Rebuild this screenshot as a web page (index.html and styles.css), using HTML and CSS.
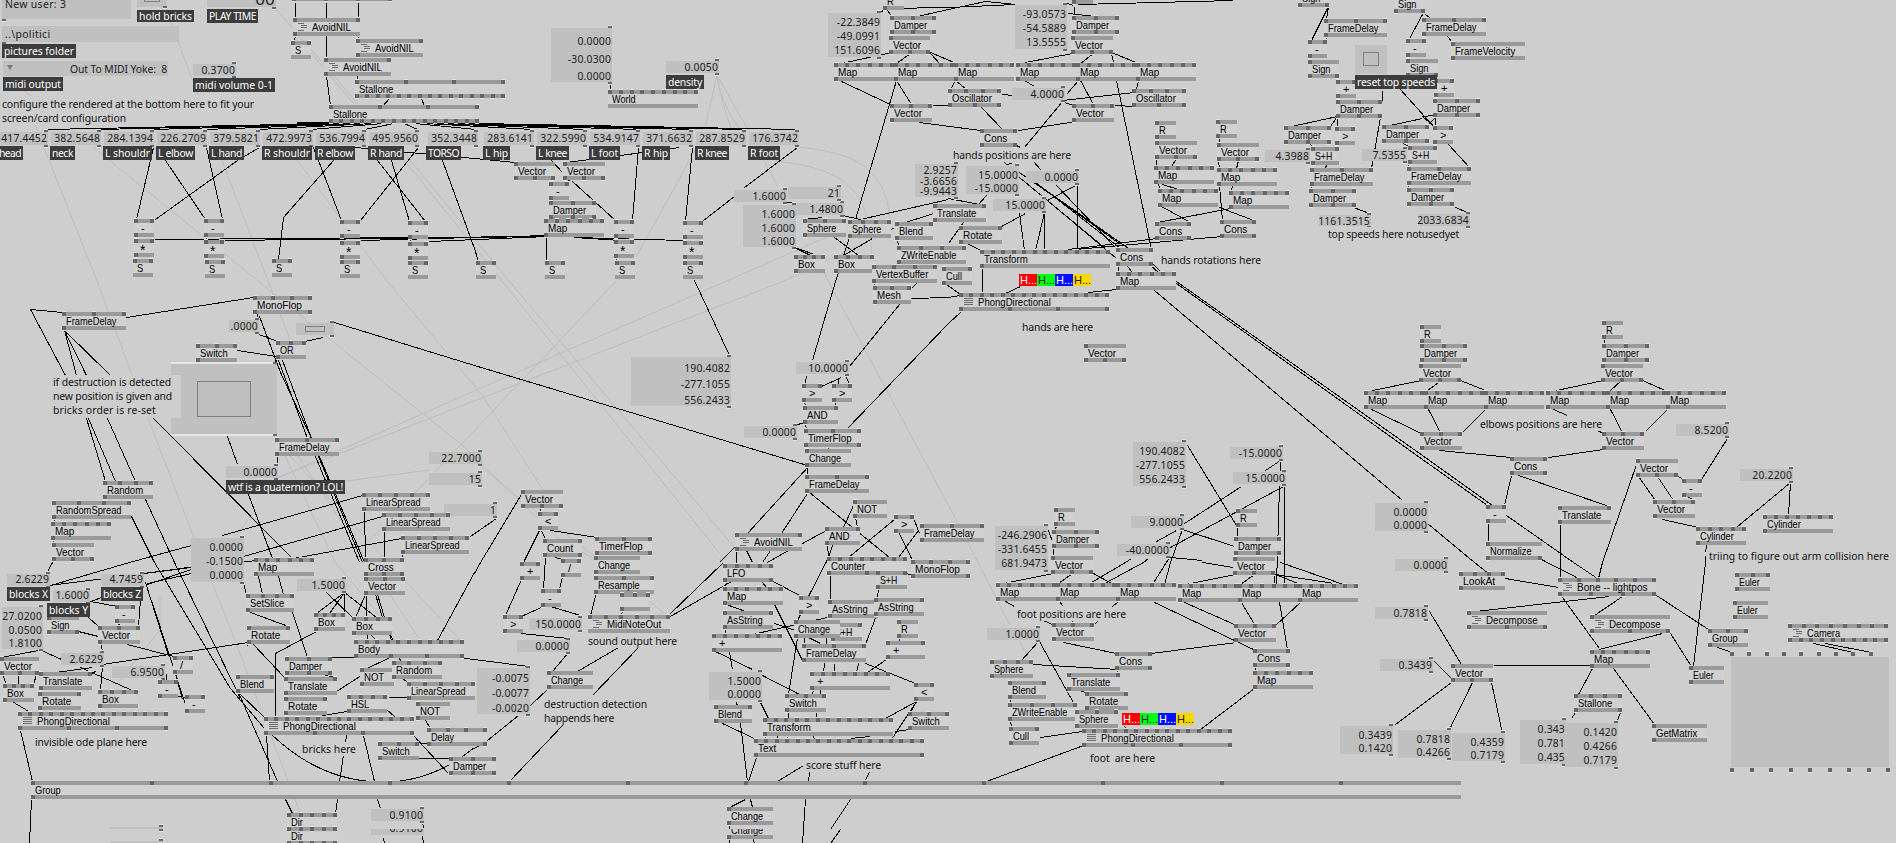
FILE: index.html
```html
<!DOCTYPE html>
<html lang="en">
<head>
<meta charset="utf-8">
<title>Patch</title>
<link rel="stylesheet" href="styles.css">
</head>
<body>
<main class="patch" id="patch">
  <svg class="wires" id="wires" width="1896" height="843" viewBox="0 0 1896 843"></svg>
</main>
<script src="patch.js"></script>
</body>
</html>
```

FILE: styles.css
```css
html, body { margin: 0; padding: 0; }
body { background: #cecece; overflow: hidden; }

.patch {
  position: relative;
  width: 1896px;
  height: 843px;
  overflow: hidden;
  background: #cecece;
  color: #000;
}
.wires { position: absolute; left: 0; top: 0; display: block; }
.wire { fill: none; stroke: #000; stroke-width: 1; shape-rendering: crispEdges; }
.wire-soft { fill: none; stroke: #bebebe; stroke-width: 1; }

.node {
  position: absolute;
  box-sizing: border-box;
  height: 18px;
  background: #d1d1d1;
  border-top: 4px solid #9a9a9a;
  border-bottom: 4px solid #9a9a9a;
}
.name {
  position: absolute;
  left: 3.6px;
  top: -1px;
  font: 11px/12px "Liberation Sans", Arial, sans-serif;
  white-space: pre;
  transform: scaleX(.85);
  transform-origin: 0 0;
}
.name.symbol { left: 7px; transform: none; }
.name.star { top: 0; left: 6px; font-size: 14px; line-height: 15px; }
.with-icon .name { left: 18.6px; }
.icon { position: absolute; left: 5px; top: 1px; width: 9px; height: 8px; }
.icon path { stroke: #6c6c6c; stroke-width: 1; fill: none; shape-rendering: crispEdges; }

.pin { position: absolute; width: 4px; height: 4px; background: #666; }
.pin-in { box-shadow: 0 -1px #e2e2e2; }
.pin-out { box-shadow: 0 1px #e2e2e2; }
.pin.short { height: 2px; }

.io { position: absolute; background: #c0c0c0; }
.value, .comment, .tag {
  font: 10.4px/14px "Noto Sans", "Open Sans", sans-serif;
  white-space: pre;
}
.value { position: absolute; right: 1px; color: #1c1c1c; letter-spacing: .17px; line-height: 10px; }
.value.left { right: auto; left: 3px; letter-spacing: .35px; }
.value.big { font-size: 17px; }
.comment { position: absolute; background: #cecece; color: #141414; }
.tag {
  position: absolute;
  box-sizing: border-box;
  padding-left: 2px;
  background: #3c3c3c;
  color: #fff;
  overflow: hidden;
}
.cut { clip-path: inset(8px 0 0 0); }
.value.cut { clip-path: inset(6px 0 0 0); }

.toggle { position: absolute; box-sizing: border-box; border: 1px solid #808080; }
.bang { border-top: 2px solid #e6e6e6; border-bottom: 2px solid #e6e6e6; box-sizing: border-box; }
.arrow {
  position: absolute;
  left: 4px;
  top: 4px;
  border: 3.5px solid transparent;
  border-top: 5px solid #7c7c7c;
  border-bottom: 0;
}
.chips { position: absolute; display: flex; height: 12px; }
.chip {
  box-sizing: border-box;
  width: 18px;
  padding-left: 1px;
  font: 11px/12px "Liberation Sans", Arial, sans-serif;
  overflow: hidden;
  white-space: nowrap;
}
.chip.red { background: #ff0000; color: #fff; }
.chip.green { background: #00ff12; color: #222; }
.chip.blue { background: #0010ff; color: #fff; }
.chip.yellow { background: #f8d800; color: #222; }
```

FILE: patch.js
```js
// x y width inputs outputs name ; "~" = module icon, "=" = effect icon
const nodes = `
292 -17 100 0 4
293 18 67 2 1 ~AvoidNIL
356 39 67 2 1 ~AvoidNIL
324 58 67 2 1 ~AvoidNIL
291 41 20 2 0 S
355 80 150 4 15 Stallone
329 105 150 4 15 Stallone
134 219 20 2 1 -
134 239 20 2 1 *
133 259 20 2 0 S
204 219 20 2 1 -
204 240 20 2 1 *
205 260 20 2 0 S
272 259 20 2 0 S
340 220 20 2 1 -
340 241 20 2 1 *
340 260 20 2 0 S
408 221 20 2 1 -
408 242 20 2 1 *
408 261 20 2 0 S
476 261 20 2 0 S
549 182 20 2 1 -
549 201 47 3 3 Damper
544 219 60 6 1 Map
545 261 20 2 0 S
514 162 41 1 3 Vector
563 162 42 1 3 Vector
614 220 20 2 1 -
614 240 20 2 1 *
615 261 20 2 0 S
683 221 20 2 1 -
683 241 20 2 1 *
683 261 20 2 0 S
608 90 90 9 0 World
883 -8 21 1 1 R
890 16 46 3 3 Damper
889 36 41 1 3 Vector
834 63 60 6 1 Map
894 63 60 6 1 Map
954 63 60 6 1 Map
890 104 42 3 1 Vector
803 219 43 3 1 Sphere
848 220 43 4 1 Sphere
794 255 31 4 1 Box
834 255 40 4 1 Box
895 222 38 2 1 Blend
897 246 69 4 1 ZWriteEnable
872 265 65 4 1 VertexBuffer
942 267 30 2 1 Cull
873 286 38 3 1 Mesh
933 204 53 2 1 Translate
1072 -14 21 1 1
1072 16 47 3 3 Damper
1071 36 42 1 3 Vector
1016 63 60 6 1 Map
1076 63 60 6 1 Map
1136 63 60 6 1 Map
948 89 53 4 3 Oscillator
1132 89 54 4 3 Oscillator
1072 104 42 3 1 Vector
980 129 37 2 2 Cons
1155 121 21 1 1 R
1155 141 42 1 3 Vector
1154 166 60 6 1 Map
1158 189 60 6 1 Map
1216 120 21 1 1 R
1217 143 42 1 3 Vector
1217 168 60 6 1 Map
1229 191 60 6 1 Map
1155 222 36 2 2 Cons
1220 220 36 2 2 Cons
959 226 43 2 1 Rotate
980 250 130 13 1 Transform
1116 248 37 2 2 Cons
1116 272 60 6 1 Map
1298 -11 31 1 2 Sign
1394 -5 31 1 2 Sign
1324 19 63 3 1 FrameDelay
1308 40 19 2 1 -
1308 60 31 1 2 Sign
1336 80 20 2 1 +
1336 100 46 3 3 Damper
1284 126 47 3 3 Damper
1335 127 20 2 1 >
1311 147 28 2 1 S+H
1310 168 63 3 1 FrameDelay
1309 189 47 3 3 Damper
1406 39 20 2 1 -
1406 59 32 1 2 Sign
1422 18 64 3 1 FrameDelay
1451 42 74 1 1 FrameVelocity
1434 79 20 2 1 +
1433 99 47 3 3 Damper
1382 125 47 3 3 Damper
1433 126 20 2 1 >
1408 146 29 2 1 S+H
1407 167 64 3 1 FrameDelay
1407 188 47 3 3 Damper
62 312 64 3 1 FrameDelay
253 296 59 4 2 MonoFlop
276 341 30 3 1 OR
196 344 41 3 1 Switch
275 438 64 3 1 FrameDelay
103 481 50 4 1 Random
52 501 79 4 1 RandomSpread
51 522 60 6 1 Map
52 543 42 1 3 Vector
362 493 68 5 1 LinearSpread
382 513 68 5 1 LinearSpread
401 536 68 5 1 LinearSpread
254 558 60 6 1 Map
364 558 40 3 3 Cross
364 577 41 3 1 Vector
802 384 20 2 1 >
832 384 20 2 1 >
803 406 35 2 1 AND
804 429 57 3 2 TimerFlop
805 449 46 1 1 Change
805 475 64 3 1 FrameDelay
853 500 34 1 1 NOT
825 527 35 2 1 AND
894 515 20 2 1 >
920 524 64 3 1 FrameDelay
735 533 67 2 1 ~AvoidNIL
827 557 80 8 3 Counter
911 560 59 4 2 MonoFlop
521 490 42 1 3 Vector
538 512 20 2 1 <
543 539 39 2 2 Count
595 537 57 3 2 TimerFlop
594 556 46 1 1 Change
561 559 20 2 1 /
520 562 20 2 1 +
541 589 20 2 1 -
503 615 20 2 1 >
594 576 60 3 1 Resample
620 593 30 3 1
588 615 82 6 0 ~MidiNoteOut
547 671 46 1 1 Change
723 564 50 5 2 LFO
723 587 60 6 1 Map
723 611 50 2 1 AsString
712 634 70 7 1 +
714 705 38 2 1 Blend
799 596 20 2 1 >
831 623 31 2 1 S+H
794 620 46 1 1 Change
802 644 64 3 1 FrameDelay
810 672 80 8 1 +
828 600 50 2 1 AsString
876 571 31 2 1 S+H
874 598 50 2 1 AsString
897 620 21 1 1 R
886 641 39 2 1 +
914 683 20 2 1 <
908 712 41 3 1 Switch
785 694 41 3 1 Switch
763 718 130 13 1 Transform
754 739 170 17 2 Text
727 807 46 1 1 Change
47 616 32 1 2 Sign
115 605 20 2 1 -
98 626 42 3 1 Vector
0 657 39 1 3 Vector
3 684 31 4 1 Box
39 672 53 2 1 Translate
38 692 43 2 1 Rotate
98 690 40 4 1 Box
173 656 20 2 1 /
158 680 20 2 1 -
185 695 20 2 1 -
18 712 150 15 4 =PhongDirectional
246 594 48 4 1 SetSlice
247 626 43 2 1 Rotate
314 613 31 4 1 Box
352 617 40 4 1 Box
354 640 110 11 4 Body
285 657 47 3 3 Damper
284 677 53 2 1 Translate
284 697 43 2 1 Rotate
236 675 38 2 1 Blend
360 668 34 1 1 NOT
392 661 50 4 1 Random
407 682 68 5 1 LinearSpread
347 695 40 4 1 HSL
416 702 34 1 1 NOT
427 728 60 4 2 Delay
378 742 41 3 1 Switch
449 757 47 3 3 Damper
264 717 150 15 4 =PhongDirectional
287 813 50 5 5 Dir
287 827 50 5 5 Dir
959 293 150 15 4 =PhongDirectional
1084 344 42 1 3 Vector
1054 508 21 1 1 R
1052 530 47 3 3 Damper
1051 556 42 1 3 Vector
1236 509 21 1 1 R
1234 537 47 3 3 Damper
1233 557 42 1 3 Vector
996 583 60 6 1 Map
1056 583 60 6 1 Map
1116 583 60 6 1 Map
1178 584 60 6 1 Map
1238 584 60 6 1 Map
1298 584 60 6 1 Map
1052 623 42 3 1 Vector
1234 624 42 3 1 Vector
1115 652 37 2 2 Cons
1253 649 37 2 2 Cons
1253 671 60 6 1 Map
990 660 43 4 1 Sphere
1008 681 38 2 1 Blend
1008 703 69 4 1 ZWriteEnable
1009 727 30 2 1 Cull
1067 673 53 2 1 Translate
1085 692 43 2 1 Rotate
1075 710 43 3 1 Sphere
1082 729 150 15 4 =PhongDirectional
1420 325 21 1 1 R
1420 344 47 3 3 Damper
1419 364 42 1 3 Vector
1364 391 60 6 1 Map
1424 391 60 6 1 Map
1484 391 60 6 1 Map
1420 432 42 3 1 Vector
1602 321 21 1 1 R
1602 344 47 3 3 Damper
1601 364 42 1 3 Vector
1546 391 60 6 1 Map
1606 391 60 6 1 Map
1666 391 60 6 1 Map
1602 432 42 3 1 Vector
1510 457 37 2 2 Cons
1636 459 42 1 3 Vector
1682 479 20 2 1 -
1653 500 42 3 1 Vector
1696 527 50 5 1 Cylinder
1763 515 70 7 1 Cylinder
1486 505 20 2 1 -
1558 506 53 2 1 Translate
1486 542 56 1 2 Normalize
1459 572 46 4 1 LookAt
1558 578 98 6 4 ~Bone -- lightpos
1467 611 80 1 3 ~Decompose
1590 615 80 1 3 ~Decompose
1735 573 35 3 1 Euler
1733 601 35 1 1 Euler
1708 629 40 3 1 Group
1788 624 100 8 10 ~Camera
1590 650 60 6 1 Map
1451 664 42 1 3 Vector
1689 666 35 1 1 Euler
1574 694 48 4 2 Stallone
1652 724 55 1 1 GetMatrix`;

// drawn width of each node name
const nameWidth = {
  MonoFlop: 45, FrameDelay: 50.5, PhongDirectional: 73, AvoidNIL: 38.5, Stallone: 34.5, Vector: 28,
  Damper: 33, Map: 19, LinearSpread: 54.5, RandomSpread: 65.5, Random: 36.5, TimerFlop: 43.5,
  Change: 32.5, AsString: 36, Transform: 44, Oscillator: 40, VertexBuffer: 52, ZWriteEnable: 55,
  Decompose: 52, FrameVelocity: 60.5, Cylinder: 33.5, MidiNoteOut: 54, Translate: 39, Rotate: 29,
  Sphere: 29, Normalize: 42, GetMatrix: 41.5, Resample: 42, Switch: 27.5, Cons: 23.5, Box: 17,
  'Bone -- lightpos': 70.5, SetSlice: 34, Counter: 34, Count: 26, NOT: 20, AND: 20.5, Blend: 24,
  Euler: 21, LookAt: 32, Camera: 33, Group: 26, World: 24, Mesh: 24, Body: 22, Delay: 23,
  Text: 18, Cross: 26, Cull: 16, 'S+H': 17.5, OR: 14, HSL: 18, LFO: 18, Sign: 18.5
};

// x y width height | value@centre ...
const boxes = `
193 64 43 12|0.3700@69.5
551 28 61 54|0.0000@41|-30.0300@59|0.0000@76
666 61 53 12|0.0050@67
828 13 53 44|-22.3849@22|-49.0991@36|151.6096@50
734 190 53 12|1.6000@196
796 203 48 12|1.4800@209
788 187 53 12|21@193
743 205 53 42|1.6000@214|1.6000@228|1.6000@241
915 164 43 33|2.9257@170|-3.6656@181|-9.9443@191
1015 5 52 44|-93.0573@14|-54.5889@28|13.5555@42
1012 88 53 12|4.0000@94
966 166 53 28|15.0000@175|-15.0000@188
1026 171 53 12|0.0000@177
993 199 53 12|15.0000@205
1265 150 45 12|4.3988@156
1319 215 52 11|1161.3515@221
1362 149 45 12|7.5355@155
1418 214 52 12|2033.6834@220
229 320 30 12|.0000@326
226 466 52 12|0.0000@472
429 452 53 12|22.7000@458
429 473 53 12|15@479
444 504 53 12|1@510
191 538 53 44|0.0000@547|-0.1500@561|0.0000@575
631 357 100 49|190.4082@368|-277.1055@384|556.2433@400
796 362 53 12|10.0000@368
744 426 53 12|0.0000@432
529 618 53 12|150.0000@624
517 640 53 12|0.0000@646
477 668 53 46|-0.0075@678|-0.0077@693|-0.0020@708
709 672 53 28|1.5000@681|0.0000@694
7 574 43 12|2.6229@579
53 590 37 12|1.6000@595
101 574 43 12|4.7459@579
2 607 41 42|27.0200@616|0.0500@630|1.8100@643
61 653 43 12|2.6229@659
112 666 53 12|6.9500@672
297 579 49 12|1.5000@585
371 809 53 12|0.9100@815
110 827 53 2
110 841 53 2
1133 442 53 44|190.4082@451|-277.1055@465|556.2433@479
1230 447 53 12|-15.0000@453
1233 472 53 12|15.0000@478
1131 516 53 12|9.0000@522
1117 544 53 12|-40.0000@550
995 526 53 44|-246.2906@535|-331.6455@549|681.9473@563
987 628 53 12|1.0000@634
1375 503 53 28|0.0000@512|0.0000@525
1395 559 53 12|0.0000@565
1375 607 53 12|0.7818@613
1380 659 53 12|0.3439@665
1340 726 53 28|0.3439@735|0.1420@748
1398 730 53 28|0.7818@739|0.4266@752
1452 733 53 28|0.4359@742|0.7179@755
1520 720 46 44|0.343@729|0.781@743|0.435@757
1565 723 53 44|0.1420@732|0.4266@746|0.7179@760
1676 424 53 12|8.5200@430
1740 469 53 12|20.2200@475`;

const joints = [
  [-2, '417.4452'], [51, '382.5648'], [104, '284.1394'], [157, '226.2709'], [210, '379.5821'],
  [263, '472.9973'], [316, '536.7994'], [369, '495.9560'], [428, '352.3448'], [484, '283.6141'],
  [537, '322.5990'], [590, '534.9147'], [643, '371.6632'], [696, '287.8529'], [749, '176.3742']
];

// x y width height text
const tags = `
137 10 57 12 hold bricks
207 9 51 14 PLAY TIME
2 44 74 14 pictures folder
3 77 60 14 midi output
193 78 82 14 midi volume 0-1
-3 146 26 14 head
50 146 25 14 neck
103 146 49 14 L shouldr
156 146 39 14 L elbow
209 146 35 14 L hand
262 146 50 14 R shouldr
315 146 40 14 R elbow
368 146 36 14 R hand
426 146 35 14 TORSO
483 146 27 14 L hip
536 146 33 14 L knee
589 146 31 14 L foot
642 146 28 14 R hip
695 146 34 14 R knee
748 146 32 14 R foot
666 75 38 14 density
1355 75 82 14 reset top speeds
226 480 119 14 wtf is a quaternion? LOL!
7 587 43 14 blocks X
47 603 43 14 blocks Y
101 587 42 14 blocks Z`;

// x centre width text
const comments = `
2 104 251 configure the rendered at the bottom here to fit your
2 118 123 screen/card configuration
953 155 117 hands positions are here
1161 260 99 hands rotations here
1328 234 130 top speeds here notusedyet
53 382 117 if destruction is detected
53 396 118 new position is given and
53 410 102 bricks order is re-set
588 641 88 sound output here
544 704 102 destruction detection
544 718 69 happends here
806 765 74 score stuff here
35 742 111 invisible ode plane here
302 749 53 bricks here
1022 327 70 hands are here
1017 614 108 foot positions are here
1090 758 64 foot  are here
1480 424 121 elbows positions are here
1709 556 179 triing to figure out arm collision here`;

const wires = `
295,2 295,18;326,2 326,58;358,2 358,18;295,36 293,41;326,76 330,105;358,36 358,40;357,57 357,80;389,98 382,106;421,98 424,106
296,122 330,122;296,123 330,123;153,147 136,219;165,160 205,219;259,147 237,160 155,219;206,147 222,219;313,147 341,220;333,160 283,217 278,259
377,160 425,221;391,160 409,221;418,147 360,220;442,160 474,248 478,261;155,239 548,236;225,240 548,236;361,240 548,235;429,241 548,236;574,237 620,240;574,237 683,240
355,147 474,158 514,162;551,160 562,172;572,181 615,220;638,147 632,220;692,147 685,221;797,147 744,187;734,196 703,220;679,147 620,155 566,162
553,179 551,182;571,179 564,182;546,236 546,261;610,82 610,90;549,198 549,202;694,280 729,355
136,235 136,240;136,257 134,260;206,235 206,241;206,257 208,261;342,237 342,242;342,257 342,261;410,238 410,243;410,258 410,262;616,238 616,241;616,257 617,262;685,238 685,242;685,257 685,262
886,8 948,7 1015,4;886,8 891,16;880,12 884,9;917,16 948,9 985,1;985,1 1006,3 1015,4;892,33 891,37
891,52 841,63;910,53 896,63;930,52 956,63;930,53 940,64;841,81 890,104;896,80 911,104;896,80 855,219;932,105 948,105;919,122 980,130
948,199 860,219;860,219 842,215;962,204 905,222;794,247 810,255;794,247 820,256;834,237 858,255;872,238 843,255;849,237 843,255;838,272 835,281 812,360;806,376 804,385;803,219 822,217;897,239 898,246;894,227 889,230;786,202 794,202
1074,6 1074,17;1078,4 1233,0;1067,3 1073,5;1068,13 1095,16;1074,33 1073,37;1072,53 1025,62;1093,53 1080,63;1111,52 1138,63;1111,53 1113,62
1116,80 1151,249;1024,80 1034,86;1078,80 1066,94;1080,80 1093,104;1138,80 1136,89;1134,106 1115,105;1062,101 1075,106;1062,100 1134,92;1062,101 1024,147
955,80 966,89;955,80 950,89;1002,94 1012,95;981,107 1002,129;1076,121 1018,130;1014,144 1020,147;1033,161 1041,170;1003,161 1006,164 1012,163
1019,172 1128,248;1030,178 1120,248;1040,186 1131,250;1041,187 1120,244;1019,177 1105,248;1056,185 1114,246;1047,200 1116,258;1077,184 1077,249;1077,184 1047,200;1044,212 1044,250;1044,212 1035,250;1019,213 1024,250;1025,213 1001,226
1157,138 1157,142;1156,158 1156,166;1176,158 1171,166;1158,184 1160,190;1162,184 1178,189;1161,206 1190,222;1230,208 1157,222;1219,136 1219,143;1218,160 1219,168;1238,160 1236,168;1219,185 1222,220;1232,185 1231,191;1219,207 1256,221;1157,238 1068,249;1222,236 1075,249
982,267 982,294;967,243 982,251;986,195 978,204;963,222 948,243;948,198 979,204;1118,265 1118,272;1127,266 1132,272;1150,265 1158,272;1152,263 1160,271
1328,6 1311,40;1328,6 1326,19;1326,36 1326,41;1310,57 1310,61;1338,77 1338,81;1338,96 1337,101;1337,116 1291,126;1337,116 1330,126;1337,116 1337,127;1380,117 1371,168;1382,90 1382,100;1399,88 1434,127;1422,118 1385,126;1433,115 1422,116 1435,127;1435,117 1424,128;1435,117 1435,127
1310,144 1313,147;1338,144 1336,148;1327,164 1324,168;1311,184 1311,190;1353,207 1369,213;1448,144 1469,167;1455,207 1467,212;1447,36 1452,42;1424,13 1430,18;1422,14 1408,40;1403,143 1410,147;1408,163 1408,168;1408,184 1408,189;1435,144 1434,147
30,309 62,312;30,309 65,375;126,317 253,297;64,330 76,375;64,330 86,375;64,330 110,375;86,418 105,481;88,418 115,481;107,418 135,481;145,499 174,562;131,516 154,562;153,418 292,558
256,312 258,320;259,316 280,372 311,438;258,334 278,341;304,341 323,337;237,350 276,356;276,358 275,362;278,360 307,438;282,360 311,438;315,456 359,562;318,456 362,562;319,456 364,562
334,322 474,365 807,465;227,436 237,464;248,494 272,558;277,454 277,465;105,498 104,502;54,518 53,523;53,539 53,544;222,535 362,495;129,562 191,545;243,556 382,516;244,561 293,558 401,538;364,510 365,558;384,531 384,558;403,552 402,558;470,536 496,518
50,585 129,562;49,585 191,567;147,583 191,573;147,584 191,569;143,573 240,560;45,575 52,562;90,601 117,606;88,602 101,597;88,617 98,626;78,631 98,636;118,622 119,626;140,599 138,626;145,582 168,655;151,600 185,704;100,642 102,651;127,644 173,656;102,666 100,690;102,664 248,642
80,667 134,691;96,670 92,673;41,650 61,659;1,657 38,650;2,674 6,684;18,674 18,684;36,674 33,684;92,667 48,673;10,700 30,712;41,690 40,693;40,709 40,712;20,730 32,781;166,673 166,680;175,673 182,699;178,696 187,697
154,562 230,688 264,728;174,562 240,698;238,692 277,781;238,692 264,717;285,799 292,813;31,799 29,843;243,583 246,594;258,576 262,594;278,576 283,594;250,612 288,626;252,643 284,677;292,612 307,657;316,631 275,653 275,717
344,592 316,613;344,592 329,613;344,592 344,613;344,592 376,617;326,592 352,617;365,594 355,617;366,594 366,617;375,594 382,617;377,594 384,617;365,575 365,579;384,575 384,579;402,575 402,579;367,634 367,640;370,634 376,640;388,630 391,640;390,634 393,641
474,572 437,640;330,657 356,657;454,657 474,659 528,666;361,675 336,691;390,657 362,670;398,657 401,661;402,678 409,683;388,697 407,697;386,709 395,717;322,715 347,711;425,720 430,728;419,743 427,743;418,758 449,758;413,735 448,773;266,734 269,781;286,711 285,717;308,671 336,677;247,645 247,643
346,735 339,781;363,735 374,781;337,799 335,813;377,799 380,808;383,838 384,843;422,821 423,828;422,836 423,843
521,494 480,562 474,573;540,528 523,562;540,528 545,539;550,530 597,537;541,507 539,512;545,557 543,589;555,557 562,559;521,579 505,615;562,576 559,589;543,606 523,615;550,606 580,615;521,633 568,638;568,652 552,671;548,688 530,705;518,715 487,740 474,748;618,647 577,671;638,647 592,695;563,724 509,781
596,592 590,615;625,597 625,609;622,610 621,616;668,615 723,562;668,617 733,580;594,572 594,577
808,466 747,533;807,493 781,533;809,492 889,557;807,465 807,475;802,543 826,530;853,505 843,527;855,517 857,527;894,519 848,557;898,531 912,560;914,520 919,533;918,530 898,557;827,543 828,557;832,545 828,557;827,559 808,596;735,546 719,562;736,550 736,564;746,550 752,562;770,550 762,562;788,550 767,562
841,377 821,386;838,377 838,384;846,377 849,384;804,401 805,406;834,401 836,406;797,424 805,422;805,423 806,429;948,323 847,428;828,447 828,449;806,446 806,450;899,304 849,366
911,298 948,297 959,295;1116,289 1088,292;1020,286 1005,293;961,311 948,323;911,288 916,283;946,284 960,294;874,283 874,287
726,582 725,588;771,580 801,596;762,582 766,587;726,604 745,611;725,629 725,635;774,604 802,660;715,651 752,669;762,675 799,694;729,652 732,669;736,702 737,706;760,702 768,718;722,723 756,739;740,723 747,781;756,757 748,781;774,623 795,630;827,617 752,634;797,637 788,694;801,612 797,620
788,711 788,718;816,712 816,718;765,735 766,740;777,736 778,739;787,736 787,739;813,736 814,739;830,574 830,600;878,587 877,598;876,615 865,644;865,663 915,683;886,659 867,672;858,663 856,672;824,663 823,672;834,663 834,672;813,689 812,695;820,689 820,695;916,701 885,718;916,701 910,712;916,701 891,739;909,729 895,731;870,736 850,738;906,573 913,575;899,637 899,641
803,765 777,781;809,772 808,781;869,772 864,781;745,799 729,807;750,799 752,807;805,799 802,843;850,799 830,829;840,829 830,843;729,824 729,829;729,839 729,843;753,839 754,843;804,637 804,644;826,637 826,644;808,637 820,643
1154,290 1402,500;1176,281 1422,455 1492,505;1176,283 1422,459 1487,505;1187,445 1236,525;1280,460 1265,470;1280,460 1280,470;1241,486 1184,523;1176,530 1156,541;1283,486 1170,547;1279,486 1276,584;1284,486 1284,584;1182,529 1234,546;1182,529 1170,562 1164,584;1170,557 1202,560;1202,562 1233,567;1169,557 1152,584;1143,562 1106,582;1125,562 1091,582;1131,558 1125,562;1148,558 1143,562
1048,530 1052,541;1056,526 1054,530;1053,548 1053,556;1237,527 1237,537;1235,554 1235,558;1053,573 1003,583;1072,573 1058,583;1093,573 1111,583;1235,574 1185,584;1254,574 1240,584;1275,574 1300,584;1275,574 1334,583;1280,562 1343,584;1274,574 1274,584
1005,601 1014,606;1058,600 1063,606;1118,601 1112,606;1154,602 1253,649;1043,620 1054,625;1072,620 1073,624;1098,620 1094,624;1184,602 1234,624;1241,602 1254,624;1300,602 1275,625;1279,602 1287,649;1063,642 1116,653;1236,642 1151,653;1038,641 1021,660;1039,641 1074,704;1033,664 1118,669;1117,669 1118,674;1079,690 1088,693;1010,699 1010,703;1010,720 1011,727;1040,737 1082,731;1255,666 1255,671;1254,688 1200,729;1124,726 1126,729;1083,745 986,781
1421,380 1372,390;1441,380 1427,390;1460,380 1485,390;1603,380 1556,390;1621,380 1610,390;1642,380 1667,391;1371,409 1421,433;1428,409 1440,432;1485,409 1462,432;1553,409 1567,415;1597,430 1603,433;1610,409 1622,432;1667,409 1645,431;1439,450 1511,457;1603,449 1548,457;1511,475 1504,505;1518,475 1609,506;1604,339 1604,344;1603,361 1602,365;1421,361 1420,365
1638,476 1655,500;1657,476 1673,500;1678,476 1684,480;1727,438 1701,479;1687,496 1694,500;1662,519 1698,527;1790,482 1736,527;1790,482 1788,515;1706,545 1705,552;1705,555 1705,562 1693,666;1636,464 1602,562 1598,578;1488,522 1488,542;1560,524 1560,578;1506,515 1573,562 1597,578;1541,559 1578,578;1427,523 1474,562 1488,573;1505,578 1558,587
1429,611 1461,664;1434,661 1452,679;1451,682 1395,724;1472,682 1449,729;1491,682 1502,733;1493,665 1591,665;1592,668 1578,694;1613,668 1654,724;1562,597 1599,648;1609,596 1475,611;1622,596 1594,615;1656,595 1708,629;1662,633 1599,649;1670,633 1691,666;1717,647 1732,652;1813,643 1853,652;1825,643 1871,652;1575,712 1571,718;1620,712 1616,722`;

const softPaths = [
  'M276 9L358 104', 'M312 54L354 104', 'M170 20L198 95', 'M23 90L31 96', 'M35 125L97 281L132 375', 'M148 418L194 538', 'M207 570L235 640L300 813',
  'M93 147L258 281', 'M68 127L90 145', 'M220 155L268 281L290 340', 'M258 281L307 321L462 445L560 540L600 562',
  'M297 160L387 281L482 395L543 490', 'M400 155L502 281L725 560', 'M406 155L509 281L745 560',
  'M717 75L705 128', 'M717 75Q722 105 731 128', 'M717 75Q720 102 739 128', 'M717 75L747 128',
  'M797 147C850 152 886 165 890 220', 'M775 161C860 170 868 200 872 255', 'M697 147L636 257',
  'M764 160L778 187', 'M616 281L474 431L370 540', 'M827 237L729 280L474 391L277 478', 'M870 240L784 281L474 401L277 478',
  'M820 265L828 281L950 508L1010 625', 'M1020 642L1030 660', 'M285 456L335 562L400 640', 'M290 456L460 640', 'M298 456L420 640',
  'M277 490L430 470', 'M160 598L160 630L118 682', 'M605 573L618 590', 'M650 602L668 616', 'M255 510L237 535', 'M480 466L540 515L600 560'
];

const patch = document.getElementById('patch');
const svg = document.getElementById('wires');
const NS = 'http://www.w3.org/2000/svg';

function el(cls, box, text, parent) {
  const e = document.createElement('div');
  e.className = cls;
  if (box) ['left', 'top', 'width', 'height'].forEach((k, i) => {
    if (box[i] !== null && box[i] !== undefined) e.style[k] = box[i] + 'px';
  });
  if (text) e.textContent = text;
  (parent || patch).appendChild(e);
  return e;
}
function path(d, cls) {
  const p = document.createElementNS(NS, 'path');
  p.setAttribute('d', d);
  p.setAttribute('class', cls);
  svg.appendChild(p);
}
const lines = s => s.trim().split('\n');
const shift = n => Number(n) + 0.5;

// letter-space a line of text so that it occupies the given width
function fit(e, width) {
  e.style.letterSpacing = '0';
  const r = document.createRange();
  r.selectNodeContents(e);
  const gap = (width - r.getBoundingClientRect().width) / e.textContent.length;
  e.style.letterSpacing = gap.toFixed(3) + 'px';
}

softPaths.forEach(d => path(d, 'wire-soft'));
joints.forEach(([x], i) => path(`M${331.5 + i * 10.4} 123.5L${x + 48.5} 129.5`, 'wire'));
lines(wires).join(';').split(';').forEach(w => {
  path('M' + w.trim().split(' ').map(p => p.split(',').map(shift).join(' ')).join('L'), 'wire');
});
path('M272 735C330 790 410 800 474 748', 'wire');

function box(x, y, w, h, values) {
  const b = el('io', [x, y, w, h]);
  (values || []).forEach(v => {
    const [t, c] = v.split('@');
    el('value', [null, c - y - 5], t, b);
  });
  el('pin pin-in short', [x + w - 4, y - 2]);
  el('pin pin-out short', [x + w - 4, y + h]);
  return b;
}
joints.forEach(([x, t]) => box(x, 132, 50, 13, [t + '@138']));

lines(boxes).forEach(l => {
  const [g, ...vals] = l.split('|');
  const [x, y, w, h] = g.split(' ').map(Number);
  box(x, y, w, h, vals);
});

// boxes with text or controls inside
const user = el('io', [2, -20, 129, 39]);
el('value left', [null, 19], 'New user: 3', user);
el('pin pin-out short', [2, 19]);
const hold = el('io', [137, -20, 30, 27]);
el('toggle', [7, 8, 16, 14], '', hold);
el('pin pin-out short', [163, 6]);
const time = el('io', [207, -20, 69, 27]);
el('value big', [null, 14], '00', time);
el('pin pin-out short', [272, 7]);
const folder = el('io', [2, 26, 177, 16]);
el('value left', [null, 3], '..\\politici', folder);
el('pin pin-out short', [2, 42]);
const midi = el('io', [3, 61, 165, 15]);
el('arrow', null, '', midi);
const port = el('value', [null, 3], 'Out To MIDI Yoke:  8', midi);
fit(port, 97);
const reset = el('io', [1355, 45, 32, 29]);
el('toggle', [8, 7, 16, 14], '', reset);
const small = box(296, 323, 38, 12);
el('toggle', [9, 3, 20, 6], '', small);
const bang = el('io bang', [171, 362, 106, 74]);
el('toggle', [26, 17, 54, 36], '', bang);
el('pin short', [273, 362]);
el('pin short', [273, 434]);
el('comment', [53, 375, 128, 43]);
const last = el('io', [371, 829, 53, 6]);
el('value cut', [null, -6], '0.9100', last);

el('io', [1731, 657, 158, 110]);
for (let i = 0; i < 9; i++) {
  el('pin pin-in', [Math.round(1730 + i * 17.35), 652]);
  el('pin pin-out', [Math.round(1730 + i * 19.5), 768]);
}

const ICONS = {
  '~': 'M0 .5H6M3 2.5H9M3 4.5H9M0 7.5H6',
  '=': 'M0 .5H9M0 2.5H9M0 4.5H9M0 6.5H9'
};
function node(x, y, w, ins, outs, name, step) {
  const n = el('node', [x, y, w]);
  if (ICONS[name[0]]) {
    n.classList.add('with-icon');
    n.insertAdjacentHTML('beforeend', `<svg class="icon" viewBox="0 0 9 8"><path d="${ICONS[name[0]]}"/></svg>`);
    name = name.slice(1);
  }
  if (name) {
    const symbol = /^[^A-Za-z]$/.test(name) ? ' symbol' : '';
    const t = el('name' + symbol + (name === '*' ? ' star' : ''), null, name, n);
    if (nameWidth[name]) t.style.transform = `scaleX(${(nameWidth[name] / t.offsetWidth).toFixed(3)})`;
  }
  const gap = c => step || (c > 1 ? (w - 4) / (c - 1) : 0);
  for (let i = 0; i < ins; i++) el('pin pin-in', [Math.round(gap(ins) * i), -4], '', n);
  for (let i = 0; i < outs; i++) el('pin pin-out', [Math.round(gap(outs) * i), 10], '', n);
  return n;
}
node(727, 821, 46, 0, 1, 'Change').classList.add('cut');
lines(nodes).forEach(l => {
  const p = l.split(' ');
  node(+p[0], +p[1], +p[2], +p[3], +p[4], p.slice(5).join(' '));
});
node(31, 781, 1430, 12, 1, 'Group', 118.9);

lines(tags).forEach(l => {
  const p = l.split(' ');
  const t = el('tag', p.slice(0, 4).map(Number), p.slice(4).join(' '));
  t.style.lineHeight = p[3] + 'px';
  fit(t, p[2] - 4);
});
lines(comments).forEach(l => {
  const p = l.split(' ');
  const c = el('comment', [+p[0], p[1] - 7], p.slice(3).join(' '));
  fit(c, +p[2] + 1);
});

[[1019, 274], [1122, 713]].forEach(([x, y]) => {
  const c = el('chips', [x, y]);
  ['red', 'green', 'blue', 'yellow'].forEach(k => el('chip ' + k, null, 'H...', c));
});
```
